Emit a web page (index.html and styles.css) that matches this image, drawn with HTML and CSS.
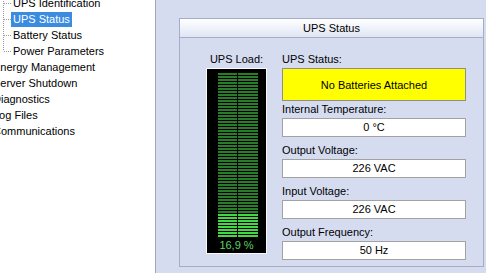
FILE: index.html
```html
<!DOCTYPE html>
<html>
<head>
<meta charset="utf-8">
<link rel="stylesheet" href="styles.css">
</head>
<body>
<div class="app">
  <aside class="tree">
    <ul class="root">
      <li class="group">
        <ul class="children">
          <li class="child"><span class="item">UPS Identification</span></li>
          <li class="child"><span class="item sel">UPS Status</span></li>
          <li class="child"><span class="item">Battery Status</span></li>
          <li class="child"><span class="item">Power Parameters</span></li>
        </ul>
      </li>
      <li class="top"><span class="item">Energy Management</span></li>
      <li class="top"><span class="item">Server Shutdown</span></li>
      <li class="top"><span class="item">Diagnostics</span></li>
      <li class="top"><span class="item">Log Files</span></li>
      <li class="top"><span class="item">Communications</span></li>
    </ul>
  </aside>
  <main class="content">
    <section class="panel">
      <header class="panel-head">UPS Status</header>
      <div class="panel-body">
        <div class="load">
          <div class="label center">UPS Load:</div>
          <div class="meter">
            <div class="bars">
              <div class="col"><div class="off"></div><div class="on"></div></div>
              <div class="col"><div class="off"></div><div class="on"></div></div>
            </div>
            <div class="pct">16,9 %</div>
          </div>
        </div>
        <div class="fields">
          <div class="label">UPS Status:</div>
          <div class="status">No Batteries Attached</div>
          <div class="label">Internal Temperature:</div>
          <div class="field">0 °C</div>
          <div class="label">Output Voltage:</div>
          <div class="field">226 VAC</div>
          <div class="label">Input Voltage:</div>
          <div class="field">226 VAC</div>
          <div class="label">Output Frequency:</div>
          <div class="field">50 Hz</div>
        </div>
      </div>
    </section>
  </main>
</div>
</body>
</html>
```

FILE: styles.css
```css
html, body {
  margin: 0;
  padding: 0;
}
body {
  font-family: "Liberation Sans", Arial, sans-serif;
  font-size: 11px;
  color: #000;
}
.app {
  display: flex;
  width: 486px;
  height: 273px;
  overflow: hidden;
}
.tree {
  flex: none;
  width: 155px;
  background: #fff;
  border-right: 1px solid #a3a8b8;
  overflow: hidden;
}
.root, .children {
  list-style: none;
  margin: 0;
  padding: 0;
}
.root {
  margin-top: -5px;
}
.root li {
  height: 16px;
  line-height: 16px;
  white-space: nowrap;
}
.root li.group {
  height: auto;
}
.children {
  background: repeating-linear-gradient(to bottom, #9a9a9a 0 1px, transparent 1px 2px) 3px 0 / 1px calc(100% - 8px) no-repeat;
}
.child {
  padding-left: 11px;
  background: repeating-linear-gradient(to right, #9a9a9a 0 1px, transparent 1px 2px) 4px 8px / 7px 1px no-repeat;
}
.item {
  display: inline-block;
  vertical-align: top;
  margin-top: 1px;
  line-height: 15px;
  padding: 0 2px;
}
.sel {
  background: #3b8be0;
  color: #fff;
}
.top .item {
  margin-left: -9px;
}
.content {
  flex: 1;
  background: #d6dcf0;
  padding: 18px 0 0 23px;
}
.panel {
  box-sizing: border-box;
  width: 305px;
  height: 249px;
  border: 1px solid #a6adc5;
}
.panel-head {
  height: 18px;
  line-height: 18px;
  text-align: center;
  border-bottom: 1px solid #a6adc5;
  background: linear-gradient(#ffffff, #e0e5f4);
}
.panel-body {
  display: flex;
  gap: 15px;
  padding: 14px 0 0 26px;
}
.load {
  width: 61px;
}
.label {
  height: 14px;
  line-height: 14px;
  margin-bottom: 2px;
  white-space: nowrap;
}
.label.center {
  text-align: center;
}
.meter {
  box-sizing: border-box;
  height: 186px;
  border: 1px solid #fbfbfb;
  background: #000;
  padding-top: 4px;
}
.bars {
  display: grid;
  grid-template-columns: 19px 20px;
  gap: 1px;
  height: 165px;
  margin: 0 8px 0 11px;
}
.col {
  display: flex;
  flex-direction: column;
}
.off {
  flex: 1;
  background: repeating-linear-gradient(to bottom, #2a7c2a 0 2px, #000 2px 3px);
}
.on {
  height: 24px;
  background: repeating-linear-gradient(to bottom, #45d645 0 2px, #000 2px 3px);
}
.pct {
  line-height: 15px;
  text-align: center;
  color: #5ed35e;
}
.fields {
  width: 184px;
}
.status {
  box-sizing: border-box;
  height: 33px;
  margin-bottom: 1px;
  display: flex;
  align-items: center;
  justify-content: center;
  background: #ffff00;
  border: 1px solid #8e8e8e;
}
.field {
  box-sizing: border-box;
  height: 19px;
  line-height: 17px;
  margin-bottom: 6px;
  text-align: center;
  background: #fff;
  border: 1px solid #a2a2a2;
}
```
